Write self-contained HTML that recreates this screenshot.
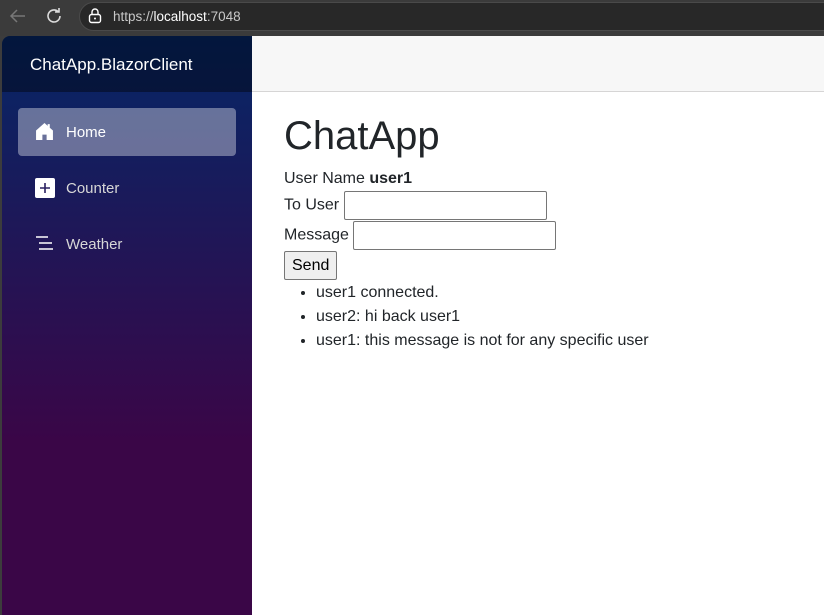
<!DOCTYPE html>
<html><head><meta charset="utf-8"><style>
*{box-sizing:border-box}
body{margin:0;width:824px;height:615px;overflow:hidden;background:#3c3c3c;font-family:"Liberation Sans",Arial,sans-serif;position:relative}
.chrome{position:absolute;left:0;top:0;width:824px;height:36px;background:#3b3b3b}
.url{position:absolute;left:79px;top:2px;width:760px;height:29px;border-radius:15px;background:#282828;border:1px solid #4a4a4a}
.url span{position:absolute;left:33px;top:6px;font-size:13.5px;color:#c8c8c8}
.url b{color:#fff;font-weight:normal}
.side{position:absolute;left:2px;top:36px;width:250px;height:579px;background:linear-gradient(180deg,#052767 0%,#3a0647 70%);border-top-left-radius:8px;overflow:hidden}
.brand{height:56px;background:rgba(0,0,0,0.4);color:#fff;font-size:17px;padding:19px 0 0 28px}
.nav{position:absolute;left:16px;width:218px;height:48px;border-radius:4px;color:#d7d7d7;font-size:15px}
.nav span{position:absolute;left:48px;top:16px}
.nav.act{background:rgba(255,255,255,0.37);color:#fff}
.nav svg{position:absolute;left:17px;top:14px}
.main{position:absolute;left:252px;top:36px;width:572px;height:579px;background:#fff}
.top{height:56px;background:#f7f7f7;border-bottom:1px solid #d6d5d5}
.content{position:absolute;left:32px;top:75px;color:#212529;font-size:16px}
h1{margin:0;font-weight:normal;font-size:40px;position:absolute;top:3px;left:0;white-space:nowrap}
.row{position:absolute;left:0;white-space:nowrap}
input{width:203px;height:29px;border:1px solid #767676;border-radius:2px;vertical-align:middle;margin:0}
button{font-family:inherit;font-size:16px;padding:0 7px;height:29px;border:1px solid #767676;background:#efefef;border-radius:2px;color:#000}
ul{margin:0;padding-left:32px}
li{line-height:24px}
</style></head><body>
<div class="chrome">
<svg width="20" height="20" style="position:absolute;left:8px;top:6px" viewBox="0 0 20 20"><path d="M17 10H3M9 4 3 10l6 6" stroke="#777" stroke-width="1.5" fill="none"/></svg>
<svg width="20" height="20" style="position:absolute;left:44px;top:6px" viewBox="0 0 20 20"><path d="M16 10a6 6 0 1 1-2-4.5M15 2v4h-4" stroke="#ddd" stroke-width="1.6" fill="none"/></svg>
<div class="url"><svg width="14" height="16" style="position:absolute;left:8px;top:5px" viewBox="0 0 14 16"><rect x="1.5" y="6.5" width="11" height="8" rx="2" stroke="#fff" stroke-width="1.4" fill="none"/><path d="M4 6.5V4a3 3 0 0 1 6 0v2.5" stroke="#fff" stroke-width="1.4" fill="none"/><circle cx="7" cy="10.5" r="1" fill="#fff"/></svg><span>https://<b>localhost</b>:7048</span></div>
</div>
<div class="side">
<div class="brand">ChatApp.BlazorClient</div>
<div class="nav act" style="top:72px"><svg width="19" height="19" viewBox="0 0 18 18"><path d="M9 1 1 8v9h6v-5h4v5h6V8l-3-2.6V2h-2v1.7z" fill="#fff"/></svg><span>Home</span></div>
<div class="nav" style="top:128px"><svg width="20" height="20" viewBox="0 0 20 20"><rect x="0" y="0" width="20" height="20" rx="2" fill="#fff"/><path d="M10 5v10M5 10h10" stroke="#2a2060" stroke-width="1.6"/></svg><span>Counter</span></div>
<div class="nav" style="top:184px"><svg width="20" height="20" viewBox="0 0 20 20"><path d="M1 3h12M4 9h13M4 15h14" stroke="#fff" stroke-width="1.4"/></svg><span>Weather</span></div>
</div>
<div class="main">
<div class="top"></div>
<div class="content">
<h1>ChatApp</h1>
<div class="row" style="top:59px">User Name <b>user1</b></div>
<div class="row" style="top:80px">To User <input></div>
<div class="row" style="top:110px">Message <input></div>
<div class="row" style="top:140px"><button>Send</button></div>
<div class="row" style="top:170px"><ul><li>user1 connected.</li><li>user2: hi back user1</li><li>user1: this message is not for any specific user</li></ul></div>
</div>
</div>
</body></html>
